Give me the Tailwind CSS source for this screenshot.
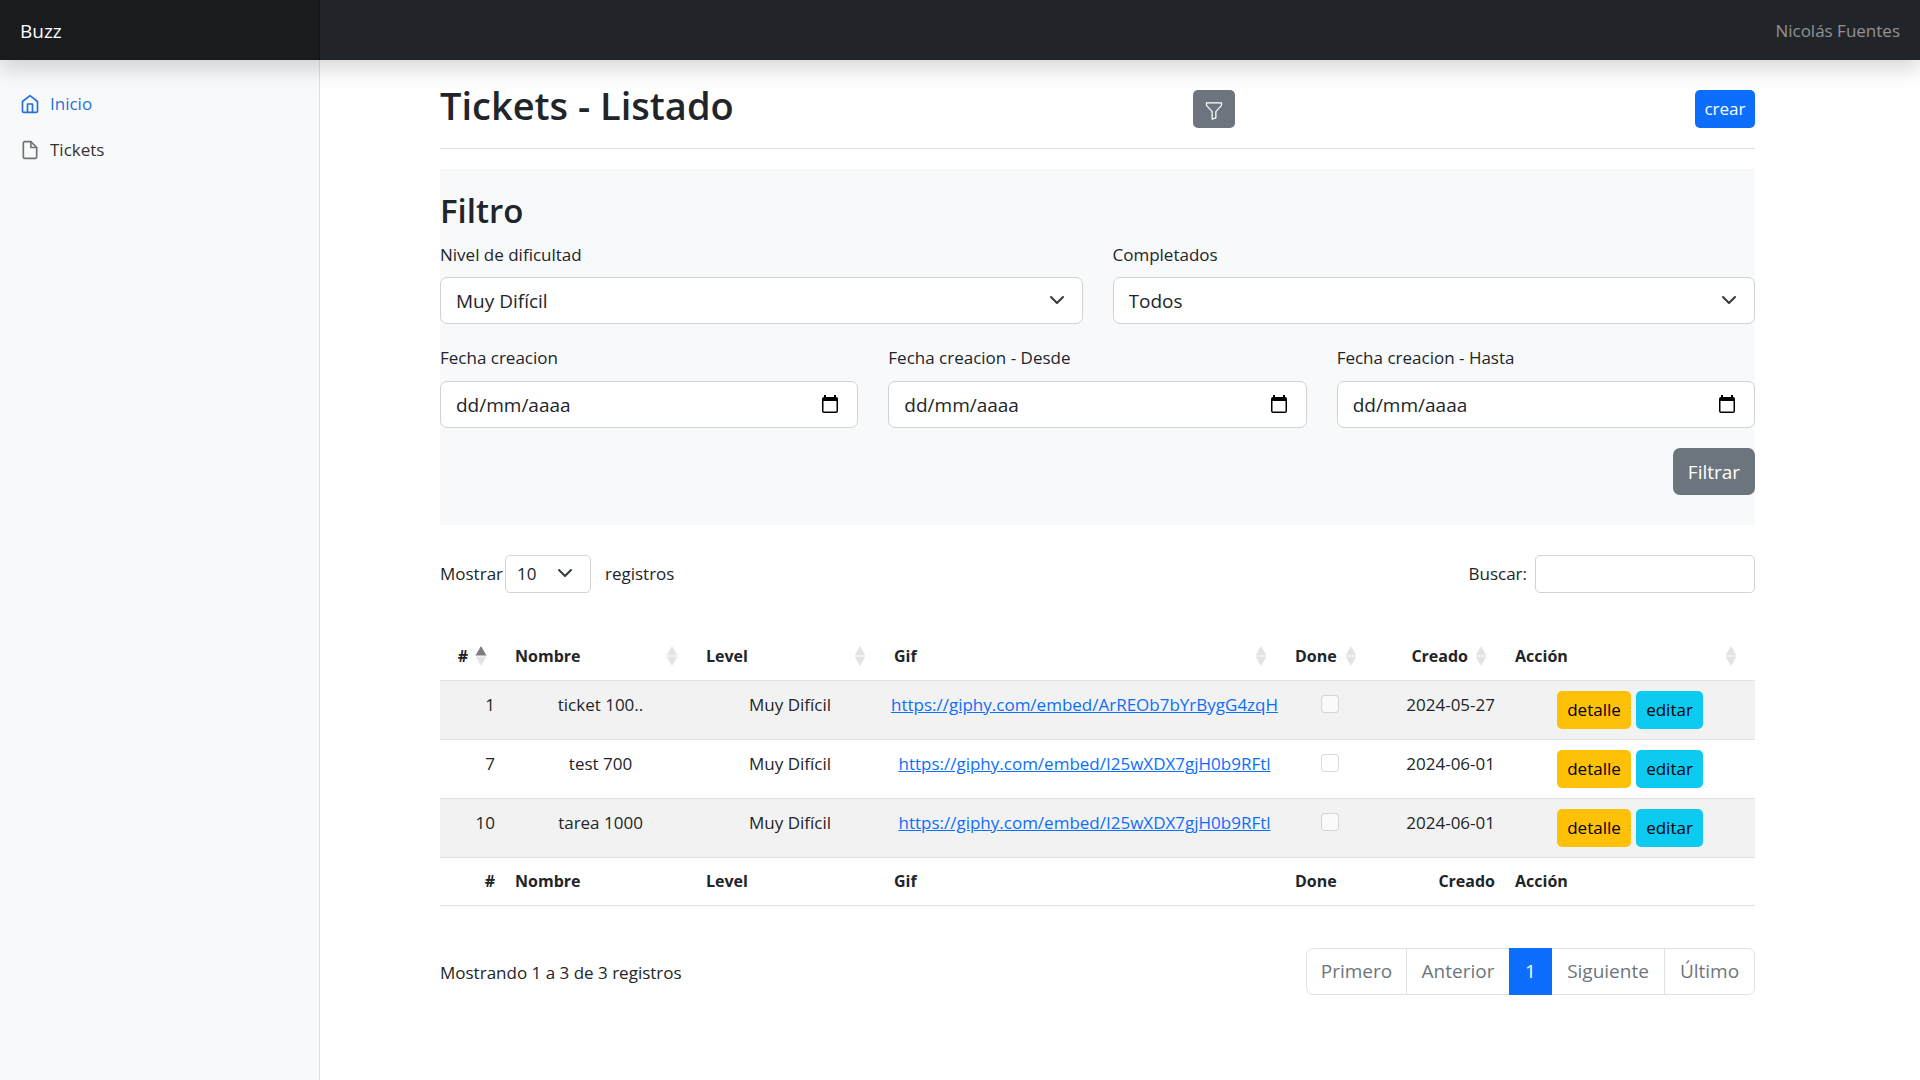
<!DOCTYPE html>
<html lang="es">
<head>
<meta charset="utf-8">
<meta name="viewport" content="width=device-width, initial-scale=1">
<title>Buzz - Tickets</title>
<script src="https://cdn.jsdelivr.net/npm/@tailwindcss/browser@4"></script>
</head>
<body class="flex min-h-screen flex-col bg-white font-['Open_Sans',sans-serif] text-[17px] leading-[26px] text-[#212529]">

<svg class="hidden" aria-hidden="true">
  <symbol id="chevron" viewBox="0 0 16 16"><path d="m2 5 6 6 6-6" fill="none" stroke="#343a40" stroke-width="2" stroke-linecap="round" stroke-linejoin="round"/></symbol>
  <symbol id="calendar" viewBox="0 0 16 18"><path d="M2 0h2v2h8V0h2v2a2 2 0 0 1 2 2v12a2 2 0 0 1-2 2H2a2 2 0 0 1-2-2V4a2 2 0 0 1 2-2zM1.500 6v10.500h13V6z" fill="#000" fill-rule="evenodd"/></symbol>
  <symbol id="sort" viewBox="0 0 12 20"><path d="M6 0l5.500 9.500H.5zM6 20L.5 10.500h11z" fill="#e2e3e3"/></symbol>
  <symbol id="sort-asc" viewBox="0 0 12 20"><path d="M6 0l5.500 9.500H.5z" fill="#7a7c7f"/><path d="M6 20L.5 10.500h11z" fill="#e2e3e3"/></symbol>
</svg>

<header class="relative z-10 flex h-[60px] items-center justify-between bg-[#212529] shadow-[0_10px_20px_rgba(0,0,0,0.15)]">
  <a href="#" class="flex h-full w-[320px] items-center bg-[#191c1f] px-5 pt-px text-[19px] text-white shadow-[inset_-1px_0_0_rgba(0,0,0,0.25)]">Buzz</a>
  <a href="#" class="px-5 pt-px text-white/50">Nicolás Fuentes</a>
</header>

<div class="flex grow">
  <nav class="w-[320px] shrink-0 bg-[#f8f9fa] pt-[21px] shadow-[inset_-1px_0_0_rgba(0,0,0,0.1)]">
    <ul>
      <li><a href="#" class="flex h-[46px] items-center gap-[10px] px-5 font-medium text-[#2470dc]">
        <svg class="size-5" viewBox="0 0 24 24" fill="none" stroke="currentColor" stroke-width="2" stroke-linecap="round" stroke-linejoin="round"><path d="M3 9l9-7 9 7v11a2 2 0 0 1-2 2H5a2 2 0 0 1-2-2z"/><path d="M9 22V12h6v10"/></svg>
        Inicio</a></li>
      <li><a href="#" class="flex h-[46px] items-center gap-[10px] px-5 font-medium text-[#333]">
        <svg class="size-5 text-[#727272]" viewBox="0 0 24 24" fill="none" stroke="currentColor" stroke-width="2" stroke-linecap="round" stroke-linejoin="round"><path d="M13 2H6a2 2 0 0 0-2 2v16a2 2 0 0 0 2 2h12a2 2 0 0 0 2-2V9z"/><path d="M13 2v7h7"/></svg>
        Tickets</a></li>
    </ul>
  </nav>

  <main class="min-w-0 grow pr-[165px] pb-10 pl-[120px]">
    <div class="mb-5 flex items-center justify-between border-b border-[#dee2e6] pt-[23px] pb-[13px]">
      <h1 class="pb-2 text-[38px] leading-[44px] font-semibold">Tickets - Listado</h1>
      <button type="button" aria-label="Mostrar filtro" class="flex h-[38px] w-[42px] items-center justify-center rounded-[5px] bg-[#6c757d] text-white">
        <svg class="mt-1 size-5" viewBox="0 0 16 16" fill="currentColor"><path d="M1.500 1.500A.5.5 0 0 1 2 1h12a.5.5 0 0 1 .5.5v2a.5.5 0 0 1-.128.334L10 8.692V13.500a.5.5 0 0 1-.342.474l-3 1A.5.5 0 0 1 6 14.500V8.692L1.628 3.834A.5.5 0 0 1 1.500 3.500zm1 .5v1.308l4.372 4.858A.5.5 0 0 1 7 8.500v5.306l2-.666V8.500a.5.5 0 0 1 .128-.334L13.500 3.308V2z"/></svg>
      </button>
      <a href="#" class="flex h-[38px] w-[60px] items-center justify-center rounded-[5px] bg-[#0d6efd] text-white">crear</a>
    </div>

    <form class="bg-[#f8f9fa] pt-5 pb-[30px]">
      <h2 class="mb-[10px] text-[33px] leading-[43px] font-semibold">Filtro</h2>
      <div class="grid grid-cols-2 gap-[30px]">
        <div>
          <label for="nivel" class="mb-[9px] block">Nivel de dificultad</label>
          <div class="relative">
            <select id="nivel" class="h-[47px] w-full appearance-none rounded-[7px] border border-[#ced4da] bg-white px-[15px] text-[19px]"><option>Muy Difícil</option></select>
            <svg class="pointer-events-none absolute top-[15px] right-[18px] size-4"><use href="#chevron"/></svg>
          </div>
        </div>
        <div>
          <label for="completados" class="mb-[9px] block">Completados</label>
          <div class="relative">
            <select id="completados" class="h-[47px] w-full appearance-none rounded-[7px] border border-[#ced4da] bg-white px-[15px] text-[19px]"><option>Todos</option></select>
            <svg class="pointer-events-none absolute top-[15px] right-[18px] size-4"><use href="#chevron"/></svg>
          </div>
        </div>
      </div>
      <div class="mt-[21px] grid grid-cols-3 gap-[30px]">
        <div>
          <label for="fecha" class="mb-[10px] block">Fecha creacion</label>
          <div class="relative">
            <input id="fecha" type="text" placeholder="dd/mm/aaaa" class="h-[47px] w-full rounded-[7px] border border-[#ced4da] bg-white px-[15px] text-[19px] placeholder:text-[#212529]">
            <svg class="absolute top-[14px] right-[20px] h-[18px] w-4"><use href="#calendar"/></svg>
          </div>
        </div>
        <div>
          <label for="desde" class="mb-[10px] block">Fecha creacion - Desde</label>
          <div class="relative">
            <input id="desde" type="text" placeholder="dd/mm/aaaa" class="h-[47px] w-full rounded-[7px] border border-[#ced4da] bg-white px-[15px] text-[19px] placeholder:text-[#212529]">
            <svg class="absolute top-[14px] right-[20px] h-[18px] w-4"><use href="#calendar"/></svg>
          </div>
        </div>
        <div>
          <label for="hasta" class="mb-[10px] block">Fecha creacion - Hasta</label>
          <div class="relative">
            <input id="hasta" type="text" placeholder="dd/mm/aaaa" class="h-[47px] w-full rounded-[7px] border border-[#ced4da] bg-white px-[15px] text-[19px] placeholder:text-[#212529]">
            <svg class="absolute top-[14px] right-[20px] h-[18px] w-4"><use href="#calendar"/></svg>
          </div>
        </div>
      </div>
      <div class="mt-5 flex justify-end">
        <button type="submit" class="h-[47px] w-[82px] rounded-[7px] bg-[#6c757d] text-[19px] text-white">Filtrar</button>
      </div>
    </form>

    <div class="mt-[30px] flex items-center justify-between">
      <div class="flex items-center">
        <label for="cantidad" class="w-[65px]">Mostrar</label>
        <div class="relative">
          <select id="cantidad" class="h-[38px] w-[86px] appearance-none rounded-[5px] border border-[#ced4da] bg-white px-[11px]"><option>10</option></select>
          <svg class="pointer-events-none absolute top-[10px] right-[18px] size-4"><use href="#chevron"/></svg>
        </div>
        <span class="ml-[14px]">registros</span>
      </div>
      <div class="flex items-center gap-2">
        <label for="buscar">Buscar:</label>
        <input id="buscar" type="search" class="h-[38px] w-[220px] rounded-[5px] border border-[#ced4da] bg-white px-[10px]">
      </div>
    </div>

    <table class="mt-[39px] w-full table-fixed border-collapse">
      <colgroup><col class="w-[65px]"><col class="w-[191px]"><col class="w-[188px]"><col class="w-[401px]"><col class="w-[90px]"><col class="w-[130px]"><col class="w-[250px]"></colgroup>
      <thead>
        <tr class="h-[48px] border-b border-[#dee2e6] text-left text-[16px]">
          <th class="pr-[18px]"><div class="flex items-center justify-end gap-[7px]">#<svg class="h-5 w-3"><use href="#sort-asc"/></svg></div></th>
          <th class="pr-[18px] pl-[10px]"><div class="flex items-center justify-between">Nombre<svg class="h-5 w-3"><use href="#sort"/></svg></div></th>
          <th class="pr-[18px] pl-[10px]"><div class="flex items-center justify-between">Level<svg class="h-5 w-3"><use href="#sort"/></svg></div></th>
          <th class="pr-[18px] pl-[10px]"><div class="flex items-center justify-between">Gif<svg class="h-5 w-3"><use href="#sort"/></svg></div></th>
          <th class="pr-[18px] pl-[10px]"><div class="flex items-center justify-between">Done<svg class="h-5 w-3"><use href="#sort"/></svg></div></th>
          <th class="pr-[18px]"><div class="flex items-center justify-end gap-[7px]">Creado<svg class="h-5 w-3"><use href="#sort"/></svg></div></th>
          <th class="pr-[18px] pl-[10px]"><div class="flex items-center justify-between">Acción<svg class="h-5 w-3"><use href="#sort"/></svg></div></th>
        </tr>
      </thead>
      <tbody>
        <tr class="h-[59px] border-b border-[#dee2e6] bg-[#f2f2f2] text-center align-top">
          <td class="px-[10px] pt-[11px] text-right">1</td>
          <td class="px-[10px] pt-[11px]">ticket 100..</td>
          <td class="px-[10px] pt-[11px]">Muy Difícil</td>
          <td class="pt-[11px] whitespace-nowrap"><a href="#" class="text-[#0d6efd] underline">https://giphy.com/embed/ArREOb7bYrBygG4zqH</a></td>
          <td class="pt-[14px]"><input type="checkbox" disabled aria-label="Done ticket 100.." class="mx-auto block size-[18px] appearance-none rounded-[4px] border border-black/15 bg-white/60"></td>
          <td class="px-[10px] pt-[11px] text-right whitespace-nowrap">2024-05-27</td>
          <td class="px-[10px] pt-[10px]"><div class="flex justify-center gap-[5px]"><a href="#" class="flex h-[38px] w-[74px] items-center justify-center rounded-[5px] bg-[#ffc107] text-black">detalle</a><a href="#" class="flex h-[38px] w-[67px] items-center justify-center rounded-[5px] bg-[#0dcaf0] text-black">editar</a></div></td>
        </tr>
        <tr class="h-[59px] border-b border-[#dee2e6] text-center align-top">
          <td class="px-[10px] pt-[11px] text-right">7</td>
          <td class="px-[10px] pt-[11px]">test 700</td>
          <td class="px-[10px] pt-[11px]">Muy Difícil</td>
          <td class="pt-[11px] whitespace-nowrap"><a href="#" class="text-[#0d6efd] underline">https://giphy.com/embed/I25wXDX7gjH0b9RFtl</a></td>
          <td class="pt-[14px]"><input type="checkbox" disabled aria-label="Done test 700" class="mx-auto block size-[18px] appearance-none rounded-[4px] border border-black/15 bg-white/60"></td>
          <td class="px-[10px] pt-[11px] text-right whitespace-nowrap">2024-06-01</td>
          <td class="px-[10px] pt-[10px]"><div class="flex justify-center gap-[5px]"><a href="#" class="flex h-[38px] w-[74px] items-center justify-center rounded-[5px] bg-[#ffc107] text-black">detalle</a><a href="#" class="flex h-[38px] w-[67px] items-center justify-center rounded-[5px] bg-[#0dcaf0] text-black">editar</a></div></td>
        </tr>
        <tr class="h-[59px] border-b border-[#dee2e6] bg-[#f2f2f2] text-center align-top">
          <td class="px-[10px] pt-[11px] text-right">10</td>
          <td class="px-[10px] pt-[11px]">tarea 1000</td>
          <td class="px-[10px] pt-[11px]">Muy Difícil</td>
          <td class="pt-[11px] whitespace-nowrap"><a href="#" class="text-[#0d6efd] underline">https://giphy.com/embed/I25wXDX7gjH0b9RFtl</a></td>
          <td class="pt-[14px]"><input type="checkbox" disabled aria-label="Done tarea 1000" class="mx-auto block size-[18px] appearance-none rounded-[4px] border border-black/15 bg-white/60"></td>
          <td class="px-[10px] pt-[11px] text-right whitespace-nowrap">2024-06-01</td>
          <td class="px-[10px] pt-[10px]"><div class="flex justify-center gap-[5px]"><a href="#" class="flex h-[38px] w-[74px] items-center justify-center rounded-[5px] bg-[#ffc107] text-black">detalle</a><a href="#" class="flex h-[38px] w-[67px] items-center justify-center rounded-[5px] bg-[#0dcaf0] text-black">editar</a></div></td>
        </tr>
      </tbody>
      <tfoot>
        <tr class="h-[48px] border-b border-[#dee2e6] text-left text-[16px]">
          <th class="px-[10px] text-right">#</th><th class="px-[10px]">Nombre</th><th class="px-[10px]">Level</th><th class="px-[10px]">Gif</th><th class="px-[10px]">Done</th><th class="px-[10px] text-right">Creado</th><th class="px-[10px]">Acción</th>
        </tr>
      </tfoot>
    </table>

    <div class="mt-[42px] flex items-center justify-between">
      <p class="pt-1">Mostrando 1 a 3 de 3 registros</p>
      <nav aria-label="Paginación" class="flex h-[47px] items-stretch rounded-[7px] border border-[#dee2e6] text-[19px] text-[#6c757d]">
        <a href="#" class="flex w-[100px] items-center justify-center border-r border-[#dee2e6]">Primero</a>
        <a href="#" class="flex w-[102px] items-center justify-center">Anterior</a>
        <a href="#" class="-my-px flex w-[43px] items-center justify-center bg-[#0d6efd] text-white">1</a>
        <a href="#" class="flex w-[113px] items-center justify-center border-r border-[#dee2e6]">Siguiente</a>
        <a href="#" class="flex w-[89px] items-center justify-center">Último</a>
      </nav>
    </div>
  </main>
</div>
</body>
</html>
